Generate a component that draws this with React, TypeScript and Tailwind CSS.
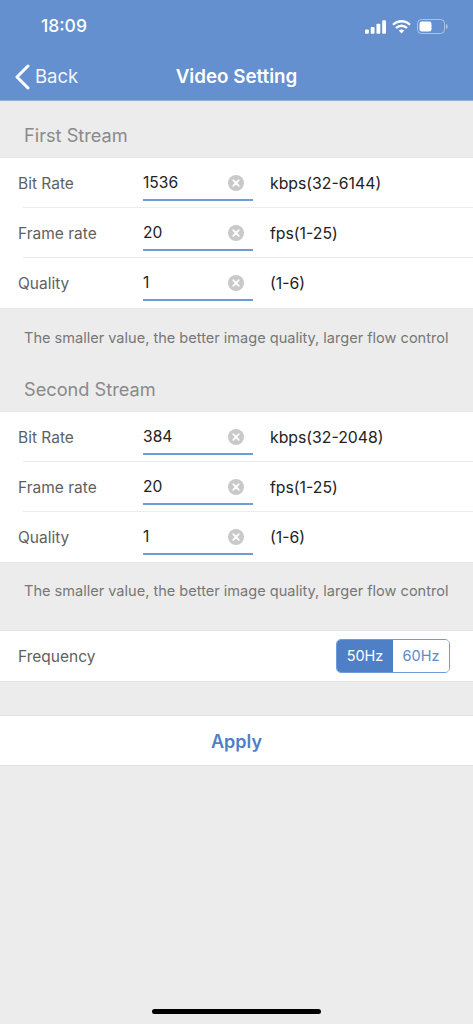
const font = "font-['Inter','Liberation_Sans',sans-serif]"

type Row = {
  label: string
  value: string
  hint: string
}

const firstStream: Row[] = [
  { label: "Bit Rate", value: "1536", hint: "kbps(32-6144)" },
  { label: "Frame rate", value: "20", hint: "fps(1-25)" },
  { label: "Quality", value: "1", hint: "(1-6)" },
]

const secondStream: Row[] = [
  { label: "Bit Rate", value: "384", hint: "kbps(32-2048)" },
  { label: "Frame rate", value: "20", hint: "fps(1-25)" },
  { label: "Quality", value: "1", hint: "(1-6)" },
]

function ClearIcon() {
  return (
    <svg width="16" height="16" viewBox="0 0 16 16" className="shrink-0">
      <circle cx="8" cy="8" r="8" fill="#c9c9c9" />
      <path d="M5.2 5.2l5.6 5.6M10.8 5.2l-5.6 5.6" stroke="#fff" strokeWidth="1.8" strokeLinecap="round" />
    </svg>
  )
}

function StatusIcons() {
  return (
    <div className="flex items-center gap-[6px]">
      <svg width="21" height="14" viewBox="0 0 22 14" fill="#fff">
        <rect x="0" y="9.5" width="4" height="4.5" rx="1" />
        <rect x="6" y="7" width="4" height="7" rx="1" />
        <rect x="12" y="3.5" width="4" height="10.500" rx="1" />
        <rect x="18" y="0" width="4" height="14" rx="1" />
      </svg>
      <svg width="19" height="14" viewBox="0 0 19 14" fill="none" stroke="#fff" strokeWidth="2.3">
        <path d="M1 4.8a12 12 0 0 1 17 0" />
        <path d="M4 8a7.8 7.8 0 0 1 11 0" />
        <path d="M9.5 13.6l-2.7-3a3.7 3.7 0 0 1 5.4 0z" fill="#fff" stroke="none" />
      </svg>
      <svg width="31" height="15" viewBox="0 0 31 15">
        <rect x="0.5" y="0.5" width="27" height="14" rx="4" fill="none" stroke="#fff" strokeOpacity="0.45" />
        <rect x="2.5" y="2.500" width="12" height="10" rx="2.2" fill="#fff" />
        <path d="M29 5v5c1-.3 1.7-1.3 1.7-2.5S30 5.300 29 5z" fill="#fff" fillOpacity="0.5" />
      </svg>
    </div>
  )
}

function StreamSection({ rows }: { rows: Row[] }) {
  return (
    <div className="bg-white border-y border-[#e6e6e6]">
      {rows.map((row, i) => (
        <div key={row.label} className="relative flex h-[50px] items-center pl-[18px] pt-[2px]">
          <div className="w-[125px] text-[15.5px] text-[#5f5f5f]">{row.label}</div>
          <div className="flex h-[34px] w-[110px] items-center justify-between border-b-2 border-[#6f9bd8] pr-[9px]">
            <span className="text-[15.6px] text-[#222]">{row.value}</span>
            <ClearIcon />
          </div>
          <div className="ml-[17px] text-[15.8px] text-[#222]">{row.hint}</div>
          {i < rows.length - 1 && <div className="absolute bottom-0 left-[23px] right-0 h-px bg-[#ececec]" />}
        </div>
      ))}
    </div>
  )
}

function Note() {
  return (
    <div className="pl-[24px] text-[14.55px] leading-[20px] whitespace-nowrap text-[#777]">
      The smaller value, the better image quality, larger flow control
    </div>
  )
}

export default function App() {
  return (
    <main className={`flex h-[1024px] w-[473px] flex-col overflow-hidden bg-[#ececec] ${font}`}>
      {/* Status bar + nav */}
      <header className="h-[101px] shrink-0 border-b border-[#8fb0de] bg-[#6490cf] text-white">
        <div className="flex h-[53px] items-center justify-between pl-[41px] pr-[25px]">
          <span className="text-[17.5px] font-medium">18:09</span>
          <StatusIcons />
        </div>
        <div className="relative flex h-[47px] items-center justify-center">
          <div className="absolute left-[14px] flex items-center gap-[5px]">
            <svg width="16" height="26" viewBox="0 0 16 26" fill="none" stroke="#fff" strokeWidth="3" strokeLinecap="round" strokeLinejoin="round">
              <path d="M14 2L3 13l11 11" />
            </svg>
            <span className="text-[18.5px] text-[#f2f6fc]">Back</span>
          </div>
          <span className="pt-[2px] text-[18.8px] font-semibold">Video Setting</span>
        </div>
      </header>

      <div className="flex h-[56px] items-center pl-[24px] pt-[14px] text-[18.2px] text-[#8a8a8a]">First Stream</div>
      <StreamSection rows={firstStream} />
      <div className="pt-[19px]">
        <Note />
      </div>

      <div className="mt-[23px] flex h-[40px] items-end pb-[8px] pl-[24px] text-[18.2px] text-[#8a8a8a]">Second Stream</div>
      <StreamSection rows={secondStream} />
      <div className="pt-[18px]">
        <Note />
      </div>

      {/* Frequency */}
      <div className="mt-[29px] flex h-[52px] items-center justify-between border-y border-[#e4e4e4] bg-white pl-[18px] pr-[23px]">
        <span className="pt-[2px] text-[15.5px] text-[#5f5f5f]">Frequency</span>
        <div className="flex h-[34px] w-[114px] overflow-hidden rounded-[5px] border border-[#6f9bd8] text-[14.5px]">
          <div className="flex flex-1 items-center justify-center bg-[#4e7fc7] text-white">50Hz</div>
          <div className="flex flex-1 items-center justify-center bg-white text-[#5d8acb]">60Hz</div>
        </div>
      </div>

      {/* Apply */}
      <div className="mt-[33px] flex h-[51px] items-center justify-center border-y border-[#e2e2e2] bg-white pt-[1px] text-[18px] font-semibold text-[#4e7fc7]">
        Apply
      </div>

      <div className="mt-auto mb-[10px] flex justify-center">
        <div className="h-[5px] w-[169px] rounded-full bg-black" />
      </div>
    </main>
  )
}
